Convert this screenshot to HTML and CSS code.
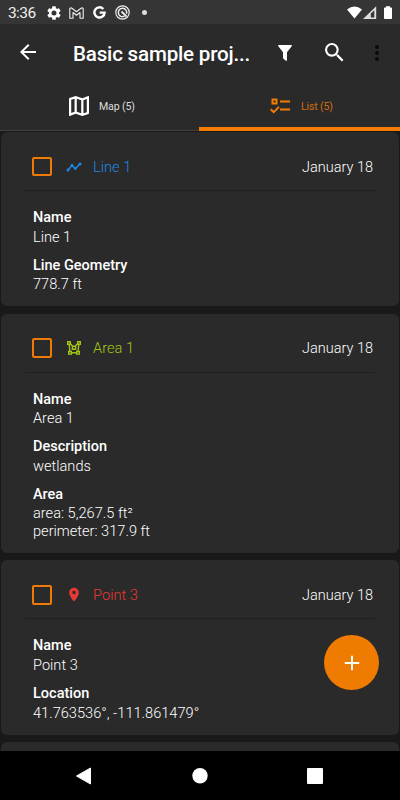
FILE: index.html
```html
<!DOCTYPE html>
<html lang="en">
<head>
<meta charset="utf-8">
<title>Basic sample project</title>
<link rel="stylesheet" href="styles.css">
</head>
<body>
<div class="screen">
  <div class="status">
    <span class="clock">3:36</span>
    <svg class="s-gear" viewBox="2 2 20 20"><path fill="#fff" d="M19.14 12.94c.04-.3.06-.61.06-.94 0-.32-.02-.64-.07-.94l2.03-1.58a.49.49 0 0 0 .12-.61l-1.92-3.32a.49.49 0 0 0-.59-.22l-2.39.96c-.5-.38-1.03-.7-1.62-.94l-.36-2.54a.48.48 0 0 0-.48-.41h-3.84c-.24 0-.43.17-.47.41l-.36 2.54c-.59.24-1.13.57-1.62.94l-2.39-.96a.48.48 0 0 0-.59.22L2.74 8.87c-.12.21-.08.47.12.61l2.03 1.58c-.05.3-.09.63-.09.94s.02.64.07.94l-2.03 1.58a.49.49 0 0 0-.12.61l1.92 3.32c.12.22.37.29.59.22l2.39-.96c.5.38 1.03.7 1.62.94l.36 2.54c.05.24.24.41.48.41h3.84c.24 0 .44-.17.47-.41l.36-2.54c.59-.24 1.13-.56 1.62-.94l2.39.96c.22.08.47 0 .59-.22l1.92-3.32a.48.48 0 0 0-.12-.61zM12 15.6a3.6 3.6 0 1 1 0-7.2 3.6 3.6 0 0 1 0 7.2z"/></svg>
    <svg class="s-mail" viewBox="0 0 15 12"><path fill="none" stroke="#eee" stroke-width="1.1" stroke-linejoin="round" d="M.8 1.5Q1.8.3 3 1.3L7.5 4.8 12 1.3Q13.2.3 14.2 1.5V11.2H11V5.5L7.5 8.2 4 5.5V11.2H.8Z"/></svg>
    <svg class="s-g" viewBox="0 0 13 13"><path fill="none" stroke="#fff" stroke-width="2.4" d="M10.3 3A5.1 5.1 0 1 0 11.6 6.6H6.7"/></svg>
    <svg class="s-circle" viewBox="0 0 15 15"><circle cx="7.5" cy="7.5" r="6.7" fill="none" stroke="#eee" stroke-width="1.2"/><path fill="none" stroke="#eee" stroke-width="1.5" d="M9.500 11.200A4.200 4.200 0 1 1 11.500 8.800"/><path stroke="#eee" stroke-width="1.8" d="M6.500 6.500L11.500 11.500"/></svg>
    <span class="s-dot"></span>
    <svg class="s-net" viewBox="0 0 46 14"><path fill="#fff" d="M0 3.4Q7.5-2.4 15 3.4L7.5 12.5Z"/><path fill="#ddd" fill-rule="evenodd" d="M16 13L29.2.2V13ZM23.8 7.6V11.5H27.3V4.3Z"/><path fill="#fff" d="M39 .2h4v1.3h1.2q.8 0 .8.8v10q0 .8-.8.8h-6.4q-.8 0-.8-.8v-10q0-.8.8-.8H39z"/></svg>
  </div>
  <header class="bar">
    <svg class="back" viewBox="4 4 16 16"><path fill="#fff" d="M20 11H7.83l5.59-5.59L12 4l-8 8 8 8 1.41-1.41L7.83 13H20v-2z"/></svg>
    <h1>Basic sample proj...</h1>
    <svg class="filter" viewBox="0 0 14 16"><path fill="#fff" d="M.7 0H13.3Q14.3.3 13.7 1.2L9 7.2V15.2Q8.8 16.2 7.8 15.7L5.5 13.7Q5 13.3 5 12.7V7.2L.3 1.2Q-.3.3.7 0Z"/></svg>
    <svg class="search" viewBox="3 3 18 18"><path fill="#fff" d="M15.5 14h-.79l-.28-.27A6.47 6.47 0 0 0 16 9.5 6.5 6.5 0 1 0 9.5 16c1.61 0 3.09-.59 4.23-1.57l.27.28v.79l5 4.99L20.49 19l-4.99-5zm-6 0a4.5 4.5 0 1 1 0-9 4.5 4.5 0 0 1 0 9z"/></svg>
    <svg class="more" viewBox="0 0 4 16"><g fill="#0b0b0b"><circle cx="2" cy="2" r="2"/><circle cx="2" cy="8" r="2"/><circle cx="2" cy="14" r="2"/></g></svg>
  </header>
  <nav class="tabs">
    <div class="tab">
      <svg class="t-map" viewBox="3 3 18 18"><path fill="#fff" d="M20.5 3l-.16.03L15 5.1 9 3 3.36 4.9c-.21.07-.36.25-.36.48V20.5c0 .28.22.5.5.5l.16-.03L9 18.9l6 2.1 5.64-1.9c.21-.07.36-.25.36-.48V3.500c0-.28-.22-.5-.5-.5zM10 5.47l4 1.4v11.66l-4-1.4V5.47zm-5 .99l3-1.01v11.7l-3 1.16V6.46zm14 11.08l-3 1.01V6.860l3-1.16v11.840z"/></svg>
      <span>Map (5)</span>
    </div>
    <div class="tab active">
      <svg class="t-list" viewBox="0 0 20 16"><path fill="none" stroke="#f57c00" stroke-width="2" d="M2.500 1.500h4v4h-4ZM10 3.500H20M10 11.500H20M.7 11.200L3.700 14.200 9 8.900"/></svg>
      <span>List (5)</span>
    </div>
  </nav>
  <main class="list">
    <article class="card">
      <div class="head"><span class="check"></span>
        <svg class="kind" viewBox="0 0 16 16"><path fill="none" stroke="#1e88e5" stroke-width="1.500" d="M2 11L6 6.500 9.300 9.500 14 5"/><g fill="#1e88e5"><circle cx="2" cy="11" r="1.500"/><circle cx="6" cy="6.500" r="1.400"/><circle cx="9.300" cy="9.500" r="1.400"/><circle cx="14" cy="5" r="1.500"/></g></svg>
        <span class="title blue">Line 1</span><time>January 18</time></div>
      <dl><dt>Name</dt><dd>Line 1</dd><dt>Line Geometry</dt><dd>778.7 ft</dd></dl>
    </article>
    <article class="card">
      <div class="head"><span class="check"></span>
        <svg class="kind" viewBox="0 0 16 16"><g fill="none" stroke="#a2c617" stroke-width="1.400"><path d="M1.700 1.700h2.600v2.600H1.700ZM11.700 1.700h2.600v2.600h-2.600ZM6.400 6.200h3.200v3H6.400ZM2.700 11.500h2.600v2.600H2.700ZM10.700 11.500h2.600v2.600h-2.600ZM3.200 4.500L3.900 11.300M12.800 4.500L12.100 11.300M5.500 12.800h5M4.500 3.800L6.800 6.500M11.500 3.800L9.200 6.500"/></g></svg>
        <span class="title green">Area 1</span><time>January 18</time></div>
      <dl><dt>Name</dt><dd>Area 1</dd><dt>Description</dt><dd>wetlands</dd><dt>Area</dt><dd>area: 5,267.5 ft²<br>perimeter: 317.9 ft</dd></dl>
    </article>
    <article class="card">
      <div class="head"><span class="check"></span>
        <svg class="kind" viewBox="4 4 16 16"><path fill="#e53935" transform="translate(0 -.3) translate(12 12) scale(.7) translate(-12 -12)" d="M12 2C8.130 2 5 5.130 5 9c0 5.250 7 13 7 13s7-7.750 7-13c0-3.870-3.130-7-7-7zm0 9.500a2.500 2.500 0 1 1 0-5 2.500 2.500 0 0 1 0 5z"/></svg>
        <span class="title red">Point 3</span><time>January 18</time></div>
      <dl><dt>Name</dt><dd>Point 3</dd><dt>Location</dt><dd>41.763536°, -111.861479°</dd></dl>
    </article>
    <article class="card"></article>
  </main>
  <footer class="nav">
    <svg viewBox="0 0 400 49"><path fill="#fff" stroke="#fff" stroke-linejoin="round" d="M76.500 25L90.500 17V33Z"/><circle cx="200" cy="24.700" r="7.700" fill="#fff"/><rect x="307" y="17" width="16" height="16" rx="1" fill="#fff"/></svg>
  </footer>
  <button class="fab" aria-label="Add"><svg viewBox="0 0 16 16"><path stroke="#fff" stroke-width="2" d="M8 .7V15.300M.7 8H15.300"/></svg></button>
</div>
</body>
</html>
```
FILE: styles.css
```css
* { box-sizing: border-box; }
body { margin: 0; background: #191919; font-family: Roboto, sans-serif; color: #fff; }
svg { display: block; flex: none; }
.screen { position: relative; width: 400px; height: 800px; display: flex; flex-direction: column; overflow: hidden; }

.status { height: 24px; flex: none; background: #353535; display: flex; align-items: center; padding: 1px 7px 0 8px; }
.clock { width: 39px; font-size: 15.5px; letter-spacing: -0.6px; color: #eee; }
.s-gear { width: 14px; height: 14px; }
.s-mail { width: 15px; height: 12px; margin-left: 8px; }
.s-g { width: 13px; height: 13px; margin-left: 9px; }
.s-circle { width: 15px; height: 15px; margin-left: 9px; }
.s-dot { width: 5px; height: 5px; border-radius: 50%; background: #ddd; margin-left: 12px; }
.s-net { width: 46px; height: 14px; margin-left: auto; }

.bar { height: 56px; flex: none; background: #2a2a2a; display: flex; align-items: center; padding: 1px 21px 0 20px; }
.back { width: 16px; height: 16px; margin-top: -1px; }
.bar h1 { margin: 2px 0 0 37px; width: 205px; flex: none; font-size: 20.6px; letter-spacing: -0.2px; line-height: 24px; font-weight: 500; white-space: nowrap; }
.filter { width: 14px; height: 16px; }
.search { width: 19px; height: 19px; margin: 0 0 0 32.500px; }
.more { width: 4px; height: 16px; margin-left: auto; }

.tabs { height: 51px; flex: none; display: flex; background: #2a2a2a; border-bottom: 1px solid #414141; }
.tab { flex: 1; display: flex; align-items: center; padding: 2px 0 0 69px; font-size: 10.6px; letter-spacing: -0.15px; color: #ddd; }
.tab.active { flex: 0 0 201px; margin-bottom: -1px; padding: 5px 0 0 71px; border-bottom: 4px solid #f57c00; color: #cf6d12; }
.t-map { width: 20px; height: 20px; margin-right: 10px; }
.t-list { width: 20px; height: 16px; margin-right: 11px; }

.list { flex: 1; min-height: 0; overflow: hidden; padding: 1px 1px 0; display: flex; flex-direction: column; gap: 7.500px; }
.card { flex: none; min-height: 80px; background: #2a2a2a; border-radius: 6px; padding: 11px 24px 2px; }
.head { display: flex; align-items: center; height: 48px; padding: 0 2px 0 7px; border-bottom: 1px solid #1f1f1f; font-size: 14.7px; font-weight: 300; }
.check { width: 19.500px; height: 19.500px; border: 2px solid #ef7b06; border-radius: 2px; }
.kind { width: 16px; height: 16px; margin-left: 14.500px; }
.title { margin-left: 11px; }
.blue { color: #1e88e5; }
.green { color: #a2c617; }
.red { color: #e53935; }
.head time { margin: 1px 0 0 auto; font-size: 14.5px; }
dl { margin: 0; padding: 18px 8px 0; font-size: 14.600px; line-height: 17.500px; font-weight: 300; }
dt { font-size: 14.500px; font-weight: 500; margin-bottom: 2px; }
dd { margin: 0 0 10.600px; }

.nav { height: 49px; flex: none; background: #000; }
.nav svg { width: 400px; height: 49px; }
.fab { position: absolute; left: 324px; top: 635px; width: 55px; height: 55px; border: 0; padding: 0; border-radius: 50%; background: #ef7b00; display: grid; place-items: center; }
.fab svg { width: 16px; height: 16px; }
```
